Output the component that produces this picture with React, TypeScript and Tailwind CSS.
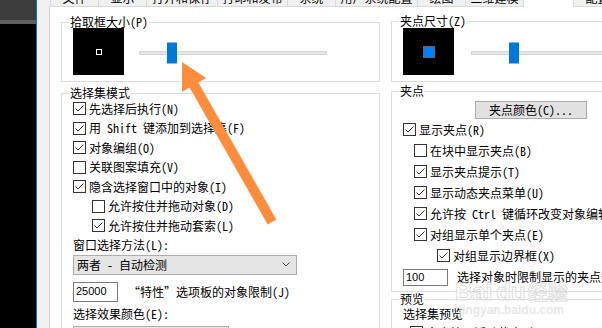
import React from 'react';

const font = "font-['Noto_Sans_Mono_CJK_SC','Noto_Sans_CJK_SC',sans-serif]";

const tabs = [
  { label: '文件', w: 'w-[48px]' },
  { label: '显示', w: 'w-[48px]' },
  { label: '打开和保存', w: 'w-[71px]' },
  { label: '打印和发布', w: 'w-[70px]' },
  { label: '系统', w: 'w-[48px]' },
  { label: '用户系统配置', w: 'w-[82px]' },
  { label: '绘图', w: 'w-[48px]' },
  { label: '三维建模', w: 'w-[58px]' },
  { label: '选择集', w: 'w-[50px]', active: true },
  { label: '配置', w: 'w-[48px]' },
];

function Check({ on }: { on: boolean }) {
  return (
    <span className="w-[13px] h-[13px] shrink-0 border border-[#333333] bg-white flex items-center justify-center">
      {on && (
        <svg width="11" height="11" viewBox="0 0 11 11">
          <path d="M1.5 5.5 L4 8 L9.5 2.5" fill="none" stroke="#333333" strokeWidth="1" />
        </svg>
      )}
    </span>
  );
}

function Row({ on, label, className }: { on: boolean; label: string; className: string }) {
  return (
    <div className={`flex items-center gap-[3px] whitespace-nowrap ${className}`}>
      <Check on={on} />
      <span>{label}</span>
    </div>
  );
}

function Slider({ track, thumb }: { track: string; thumb: string }) {
  return (
    <div className={`relative self-center mt-[2px] h-[4px] bg-[#e7e7e7] border border-[#d6d6d6] shrink-0 ${track}`}>
      <div className={`absolute top-1/2 -translate-y-1/2 w-[10px] h-[21px] bg-[#0078d7] ${thumb}`} />
    </div>
  );
}

function Legend({ children }: { children: React.ReactNode }) {
  return <legend className="ml-[7px] px-[1px] leading-[12px] h-[12px]">{children}</legend>;
}

export default function App() {
  return (
    <div className={`relative w-[602px] h-[328px] overflow-hidden flex bg-[#f0f0f0] text-[12px] text-black ${font}`}>
      {/* dark app window behind the dialog */}
      <div className="w-[36px] flex flex-col shrink-0">
        <div className="h-[20px] bg-[#3c3c3c]" />
        <div className="h-[4px] bg-[#5f5f5f]" />
        <div className="flex-1 bg-black" />
      </div>
      <div className="w-px bg-[#0078d7] shrink-0" />

      <div className="flex-1 flex flex-col pl-[12px] min-w-0">
        {/* tab strip, only the bottom edge is visible */}
        <div className="flex h-[6px] ml-px shrink-0">
          {tabs.map((t) => (
            <div
              key={t.label}
              className={`${t.w} shrink-0 overflow-hidden border-l border-[#d9d9d9] ${t.active ? 'bg-white h-[7px] relative z-10' : 'bg-[#f0f0f0]'}`}
            >
              {!t.active && <div className="mt-[-8px] leading-[12px] text-center whitespace-nowrap">{t.label}</div>}
            </div>
          ))}
        </div>

        <div className="flex-1 bg-white border-l border-t border-[#d9d9d9] flex gap-[11px] pl-[11px] pt-[9px]">
          {/* left column */}
          <div className="w-[319px] shrink-0 flex flex-col">
            <fieldset className="border border-[#dcdcdc] p-0 m-0 min-w-0">
              <Legend>拾取框大小(P)</Legend>
              <div className="flex px-[11px] pb-[6px]">
                <div className="w-[51px] h-[47px] shrink-0 bg-black flex items-center justify-center">
                  <div className="w-[6px] h-[6px] border border-white" />
                </div>
                <Slider track="ml-[15px] w-[188px]" thumb="left-[27px]" />
              </div>
            </fieldset>

            <fieldset className="mt-[5px] border border-[#dcdcdc] p-0 m-0 min-w-0">
              <Legend>选择集模式</Legend>
              <div className="flex flex-col px-[11px] pb-[40px]">
                <Row on label="先选择后执行(N)" className="h-[19.5px]" />
                <Row on label="用 Shift 键添加到选择集(F)" className="h-[19.5px]" />
                <Row on label="对象编组(O)" className="h-[19.5px]" />
                <Row on={false} label="关联图案填充(V)" className="h-[19.5px]" />
                <Row on label="隐含选择窗口中的对象(I)" className="h-[19.5px]" />
                <Row on={false} label="允许按住并拖动对象(D)" className="h-[19.5px] ml-[19px]" />
                <Row on label="允许按住并拖动套索(L)" className="h-[19.5px] ml-[19px]" />
                <div className="h-[19px] flex items-center">窗口选择方法(L):</div>
                <div className="w-[224px] h-[20px] bg-[#e5e5e5] border border-[#adadad] flex items-center justify-between pl-[3px] pr-[6px]">
                  <span>两者 - 自动检测</span>
                  <svg width="8" height="5" viewBox="0 0 8 5">
                    <path d="M0.5 0.5 L4 4 L7.5 0.5" fill="none" stroke="#444" strokeWidth="1" />
                  </svg>
                </div>
                <div className="mt-[7px] flex items-center gap-[10px] whitespace-nowrap">
                  <div className="w-[45px] h-[20px] border border-[#7a7a7a] flex items-center pl-[2px] font-['Liberation_Sans',sans-serif] text-[11px]">
                    25000
                  </div>
                  <span>“特性”选项板的对象限制(J)</span>
                </div>
                <div className="mt-[2px] h-[20px] flex items-center">选择效果颜色(E):</div>
                <div className="mt-[2px] w-[156px] h-[20px] bg-[#e5e5e5] border border-[#adadad]" />
              </div>
            </fieldset>
          </div>

          {/* right column */}
          <div className="w-[300px] shrink-0 flex flex-col">
            <fieldset className="-mt-px border border-[#dcdcdc] p-0 m-0 min-w-0">
              <Legend>夹点尺寸(Z)</Legend>
              <div className="flex px-[11px] pb-[6px] pt-px">
                <div className="w-[51px] h-[47px] shrink-0 bg-black flex items-center justify-center">
                  <div className="w-[12px] h-[12px] bg-[#0080ff] border border-[#666666]" />
                </div>
                <Slider track="ml-[17px] w-[200px]" thumb="left-[37px]" />
              </div>
            </fieldset>

            <fieldset className="mt-[3px] border border-[#dcdcdc] p-0 m-0 min-w-0">
              <Legend>夹点</Legend>
              <div className="flex flex-col px-[11px] pb-[5px]">
                <div className="mt-[4px] ml-[72px] w-[112px] h-[18px] bg-[#e1e1e1] border border-[#adadad] flex items-center justify-center">
                  夹点颜色(C)...
                </div>
                <Row on label="显示夹点(R)" className="h-[21px]" />
                <Row on={false} label="在块中显示夹点(B)" className="h-[21px] ml-[11px]" />
                <Row on label="显示夹点提示(T)" className="h-[21px] ml-[11px]" />
                <Row on label="显示动态夹点菜单(U)" className="h-[21px] ml-[11px]" />
                <Row on label="允许按 Ctrl 键循环改变对象编辑方式行为(Y)" className="h-[21px] ml-[11px]" />
                <Row on label="对组显示单个夹点(E)" className="h-[21px] ml-[11px]" />
                <Row on label="对组显示边界框(X)" className="h-[21px] ml-[34px]" />
                <div className="mt-[2px] flex items-center gap-[9px] whitespace-nowrap">
                  <div className="w-[45px] h-[17px] border border-[#7a7a7a] flex items-center pl-[2px] font-['Liberation_Sans',sans-serif] text-[11px]">
                    100
                  </div>
                  <span>选择对象时限制显示的夹点数</span>
                </div>
              </div>
            </fieldset>

            <fieldset className="mt-px border border-[#dcdcdc] p-0 m-0 min-w-0">
              <Legend>预览</Legend>
              <div className="flex flex-col px-[11px] pb-[20px]">
                <div className="h-[18px] flex items-center">选择集预览</div>
                <Row on label="命令处于活动状态时(S)" className="h-[19px] ml-[7px]" />
              </div>
            </fieldset>
          </div>
        </div>
      </div>

      {/* watermark */}
      <div className="absolute left-[455px] top-[280px] flex flex-col items-center pointer-events-none opacity-80">
        <div className="flex items-end font-['Liberation_Sans',sans-serif] font-bold text-[24px] leading-[24px] text-white [-webkit-text-stroke:1px_#d6d6d6]">
          <span>Bai</span>
          <span className="ml-[4px]">du</span>
          <span className={`ml-[2px] text-[20px] ${font}`}>经验</span>
        </div>
        <div className="font-['Liberation_Sans',sans-serif] font-bold text-[12px] leading-[13px] text-[#e2e2e2]">jingyan.baidu.com</div>
      </div>

      {/* orange arrow overlay */}
      <svg className="absolute left-0 top-0 pointer-events-none" width="602" height="328" viewBox="0 0 602 328">
        <polygon
          points="182,62 206,78 198.3,82.5 276.3,219.5 267.7,224.5 189.6,87.5 182,92"
          fill="#fd8c3c"
        />
      </svg>
    </div>
  );
}
